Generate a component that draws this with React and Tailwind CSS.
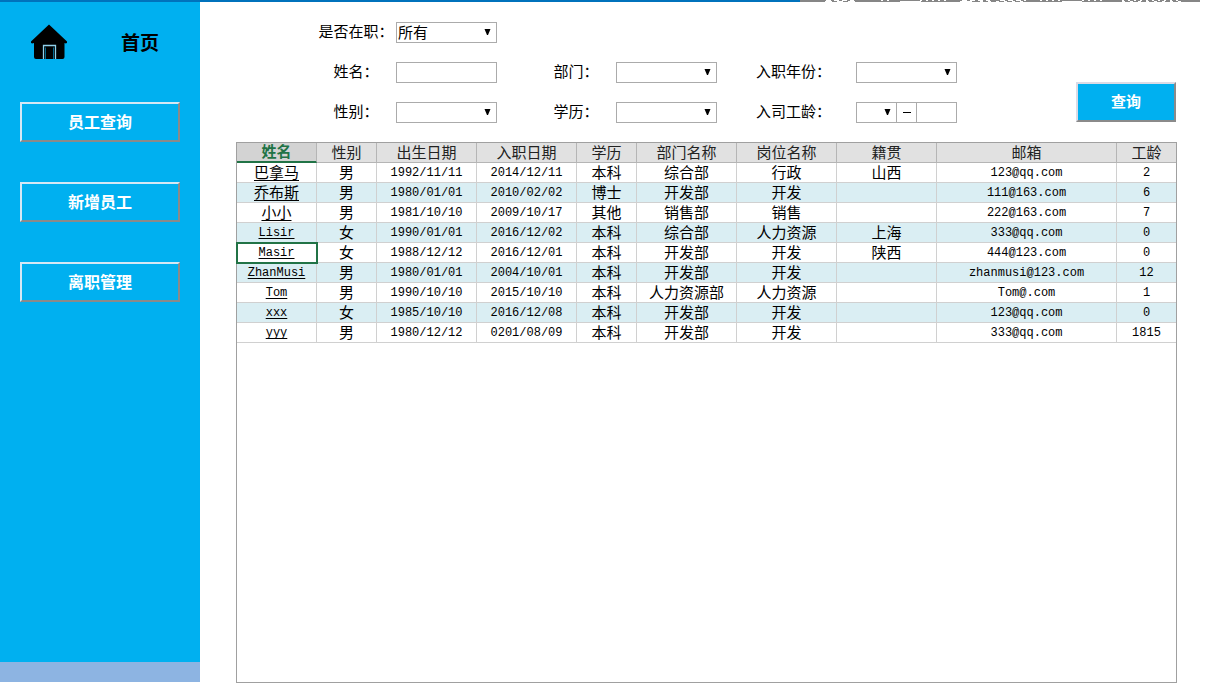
import { useState } from 'react'

const menu = ['员工查询', '新增员工', '离职管理']

const columns = [
  { title: '姓名', width: 'w-[80px]' },
  { title: '性别', width: 'w-[60px]' },
  { title: '出生日期', width: 'w-[100px]' },
  { title: '入职日期', width: 'w-[100px]' },
  { title: '学历', width: 'w-[60px]' },
  { title: '部门名称', width: 'w-[100px]' },
  { title: '岗位名称', width: 'w-[100px]' },
  { title: '籍贯', width: 'w-[100px]' },
  { title: '邮箱', width: 'w-[180px]' },
  { title: '工龄', width: 'w-auto' },
]

const employees = [
  ['巴拿马', '男', '1992/11/11', '2014/12/11', '本科', '综合部', '行政', '山西', '123@qq.com', '2'],
  ['乔布斯', '男', '1980/01/01', '2010/02/02', '博士', '开发部', '开发', '', '111@163.com', '6'],
  ['小小', '男', '1981/10/10', '2009/10/17', '其他', '销售部', '销售', '', '222@163.com', '7'],
  ['Lisir', '女', '1990/01/01', '2016/12/02', '本科', '综合部', '人力资源', '上海', '333@qq.com', '0'],
  ['Masir', '女', '1988/12/12', '2016/12/01', '本科', '开发部', '开发', '陕西', '444@123.com', '0'],
  ['ZhanMusi', '男', '1980/01/01', '2004/10/01', '本科', '开发部', '开发', '', 'zhanmusi@123.com', '12'],
  ['Tom', '男', '1990/10/10', '2015/10/10', '本科', '人力资源部', '人力资源', '', 'Tom@.com', '1'],
  ['xxx', '女', '1985/10/10', '2016/12/08', '本科', '开发部', '开发', '', '123@qq.com', '0'],
  ['yyy', '男', '1980/12/12', '0201/08/09', '本科', '开发部', '开发', '', '333@qq.com', '1815'],
]

// Latin text uses the half-width face, Chinese the full-width one
const isLatin = (text) => /^[\x00-\x7f]+$/.test(text)

function HomeIcon() {
  return (
    <svg className="w-[38px] h-9" viewBox="0 0 38 36" aria-hidden="true">
      <path d="M19 0.5 L37 17.5 Q37.5 19 36 19.5 L34.5 19 V33 Q34.5 35 32.5 35 H6 Q4 35 4 33 V19 L2 19.5 Q0.5 19 1 17.5 Z" fill="#000" />
      <path d="M13.5 35 V21.5 H25.5 V35" fill="none" stroke="#8fd0ea" strokeWidth="1.3" />
      <path d="M15.5 35 V23.5 M23.5 35 V23.5" stroke="#00b0f0" strokeWidth="0.6" />
    </svg>
  )
}

function TopStrip() {
  return (
    <div className="h-[2px] flex pr-5">
      <div className="flex-1 bg-[#0072bc]" />
      <svg className="w-[400px] h-[2px] bg-[#868686]" viewBox="0 0 400 2" aria-hidden="true">
        <g fill="none" stroke="#fff" strokeWidth="1">
          <path d="M26 0.5 H54 M162 0.5 H190 M200 0.5 H226" strokeDasharray="5 3" />
          <path d="M81 0.5 H92 M120 0.5 H150 M240 0.5 H262 M282 0.5 H306 M322 0.5 H382" strokeDasharray="2 4" />
          <path d="M25 1.5 H32 M37 1.5 H43 M48 1.5 H55 M100 1.5 H121 M160 1.5 H172 M262 1.5 H282" />
          <path d="M180 1.5 H226 M322 1.5 H382" strokeDasharray="3 5" />
        </g>
      </svg>
    </div>
  )
}

function Label({ id, start, children }) {
  return (
    <label htmlFor={id} className={start ? 'text-left whitespace-nowrap' : 'text-center whitespace-nowrap'}>
      {children}
    </label>
  )
}

function Select({ id, width = 'w-[101px]', options = [''] }) {
  return (
    <div className={`relative ${width}`}>
      <select id={id} className="block appearance-none w-full h-[21px] leading-[19px] pl-px bg-white border border-[#ababab]">
        {options.map((o) => <option key={o}>{o}</option>)}
      </select>
      <svg className="absolute right-[6px] top-[7px] w-[7px] h-[6px] pointer-events-none" viewBox="0 0 7 6" aria-hidden="true">
        <path d="M0.5 0 H6.5 L4 6 H3 Z" fill="#000" />
      </svg>
    </div>
  )
}

function Sidebar() {
  return (
    <aside className="w-[200px] shrink-0 flex flex-col pb-px">
      <div className="flex-1 bg-[#00b0f0] px-5">
        <a href="#home" className="flex items-center h-20 pl-[10px] gap-[53px] text-[19px] font-bold">
          <HomeIcon />
          <span className="pt-1">首页</span>
        </a>
        <nav className="flex flex-col gap-10 pt-5">
          {menu.map((item) => (
            <button key={item} className="h-10 pt-[2px] border-2 border-t-[#d5e8f5] border-l-[#d5e8f5] border-r-[#8a8a8a] border-b-[#8a8a8a] text-white text-base font-bold">
              {item}
            </button>
          ))}
        </nav>
      </div>
      <div className="h-5 bg-[#8db4e2]" />
    </aside>
  )
}

function Filters() {
  const [name, setName] = useState('')

  return (
    <form className="flex items-end justify-between pl-20 pr-px pt-5" onSubmit={(e) => e.preventDefault()}>
      <div className="grid grid-cols-[80px_140px_80px_140px_100px_101px] gap-y-[19px] leading-[19px]">
        <Label id="status">是否在职：</Label>
        <div className="col-span-5"><Select id="status" options={['所有', '在职', '离职']} /></div>

        <Label id="name">姓名：</Label>
        <input id="name" className="w-[101px] h-[21px] px-[2px] border border-[#ababab]" value={name} onChange={(e) => setName(e.target.value)} />
        <Label id="dept">部门：</Label>
        <Select id="dept" />
        <Label id="year" start>入职年份：</Label>
        <Select id="year" />

        <Label id="gender">性别：</Label>
        <Select id="gender" />
        <Label id="degree">学历：</Label>
        <Select id="degree" />
        <Label id="tenure" start>入司工龄：</Label>
        <div className="flex">
          <Select id="tenure" width="w-[41px]" />
          <span className="flex-1 border-y border-[#ababab] flex items-center justify-center">
            <span className="w-2 h-px bg-black" />
          </span>
          <input aria-label="工龄上限" className="w-[41px] h-[21px] px-[2px] border border-[#ababab]" />
        </div>
      </div>
      <button className="w-[100px] h-10 mb-px pt-px bg-[#00b0f0] border-2 border-t-[#dbdbe6] border-l-[#dbdbe6] border-r-[#8a8a8a] border-b-[#8a8a8a] text-white font-bold">
        查询
      </button>
    </form>
  )
}

function EmployeeTable() {
  const [selected, setSelected] = useState(4)

  return (
    <div className="flex-1 border border-[#a0a0a0]">
      <table className="w-full table-fixed border-separate border-spacing-0 text-center leading-[19px]">
        <thead>
          <tr className="bg-[#e1e1e1] text-[#222]">
            {columns.map((c, i) => (
              <th
                key={c.title}
                className={`${c.width} h-5 p-0 border-r last:border-r-0 border-[#b5b5b5] ${i === 0 ? 'bg-[#d3d3d3] text-[#217346] font-bold border-b-2 border-b-[#217346]' : 'font-normal border-b'}`}
              >
                <div className="h-[18px] leading-[18px]">{c.title}</div>
              </th>
            ))}
          </tr>
        </thead>
        <tbody>
          {employees.map((row, r) => (
            <tr key={r} className="even:bg-[#daeef3]">
              {row.map((cell, c) => (
                <td
                  key={c}
                  className={`h-5 px-0 border-r last:border-r-0 border-b border-[#d0d0d0] ${isLatin(cell) ? 'font-["Liberation_Mono",monospace] text-xs leading-[17px] pt-[2px] pb-0' : 'py-0'} ${c === 0 && r === selected ? 'relative outline-2 outline-[#217346] -outline-offset-1' : ''}`}
                >
                  {c === 0 ? (
                    <a href={`#employee-${r}`} onClick={() => setSelected(r)} className="underline underline-offset-2">{cell}</a>
                  ) : cell}
                </td>
              ))}
            </tr>
          ))}
        </tbody>
      </table>
    </div>
  )
}

export default function App() {
  return (
    <div className='min-h-screen flex flex-col bg-white text-black text-[15px] pb-[2px] font-["Liberation_Sans","Noto_Sans_CJK_SC",sans-serif]'>
      <TopStrip />
      <div className="flex-1 flex">
        <Sidebar />
        <main className="flex-1 min-w-0 flex flex-col gap-[19px] pl-9 pr-[43px]">
          <Filters />
          <EmployeeTable />
        </main>
      </div>
    </div>
  )
}
